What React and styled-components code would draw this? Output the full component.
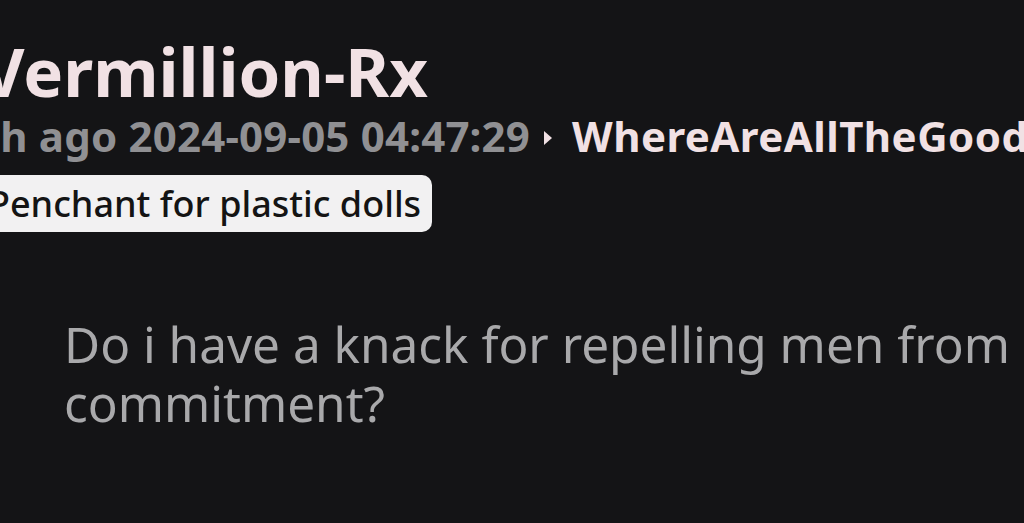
import styled, { createGlobalStyle } from "styled-components";

const GlobalStyle = createGlobalStyle`
  html, body {
    margin: 0;
    padding: 0;
    background: #141416;
    overflow: hidden;
  }
  body {
    font-family: "Noto Sans", "Open Sans", sans-serif;
  }
`;

const Page = styled.div`
  width: 1024px;
  height: 523px;
  overflow: hidden;
  background: #141416;
  padding-top: 31px;
  box-sizing: border-box;
`;

const Header = styled.div`
  display: flex;
  flex-direction: column;
  align-items: flex-start;
  margin-left: -24px;
`;

const Author = styled.h1`
  margin: 0 0 0 5px;
  font-size: 67px;
  line-height: 80px;
  font-weight: 700;
  color: #f1e1e4;
  white-space: nowrap;
`;

const Meta = styled.div`
  display: flex;
  align-items: center;
  gap: 13px;
  font-size: 42px;
  line-height: 50px;
  font-weight: 700;
  white-space: nowrap;
`;

const Time = styled.span`
  color: #909093;
  letter-spacing: 0.2px;
`;

const Arrow = styled.svg`
  flex: none;
  width: 10px;
  height: 18px;
  margin: 4px 6px 0 0;
`;

const Subject = styled.span`
  color: #f1e1e4;
  letter-spacing: 0.45px;
`;

const Flair = styled.span`
  margin-top: 14px;
  padding: 8px 11px 8px 12px;
  background: #f2f1f2;
  color: #141414;
  border-radius: 10px;
  font-size: 36px;
  line-height: 41px;
  font-weight: 500;
  white-space: nowrap;
`;

const Body = styled.p`
  margin: 83px 0 0 64px;
  font-size: 49.5px;
  line-height: 59px;
  color: #a9a9ab;
  width: 960px;
`;

export default function App() {
  return (
    <Page>
      <GlobalStyle />
      <Header>
        <Author>Vermillion-Rx</Author>
        <Meta>
          <Time>1h ago 2024-09-05 04:47:29</Time>
          <Arrow viewBox="0 0 10 18">
            <path d="M1 2 L9 9 L1 16 Z" fill="#f1e1e4" />
          </Arrow>
          <Subject>WhereAreAllTheGoodMen</Subject>
        </Meta>
        <Flair>Penchant for plastic dolls</Flair>
      </Header>
      <Body>Do i have a knack for repelling men from commitment?</Body>
    </Page>
  );
}
